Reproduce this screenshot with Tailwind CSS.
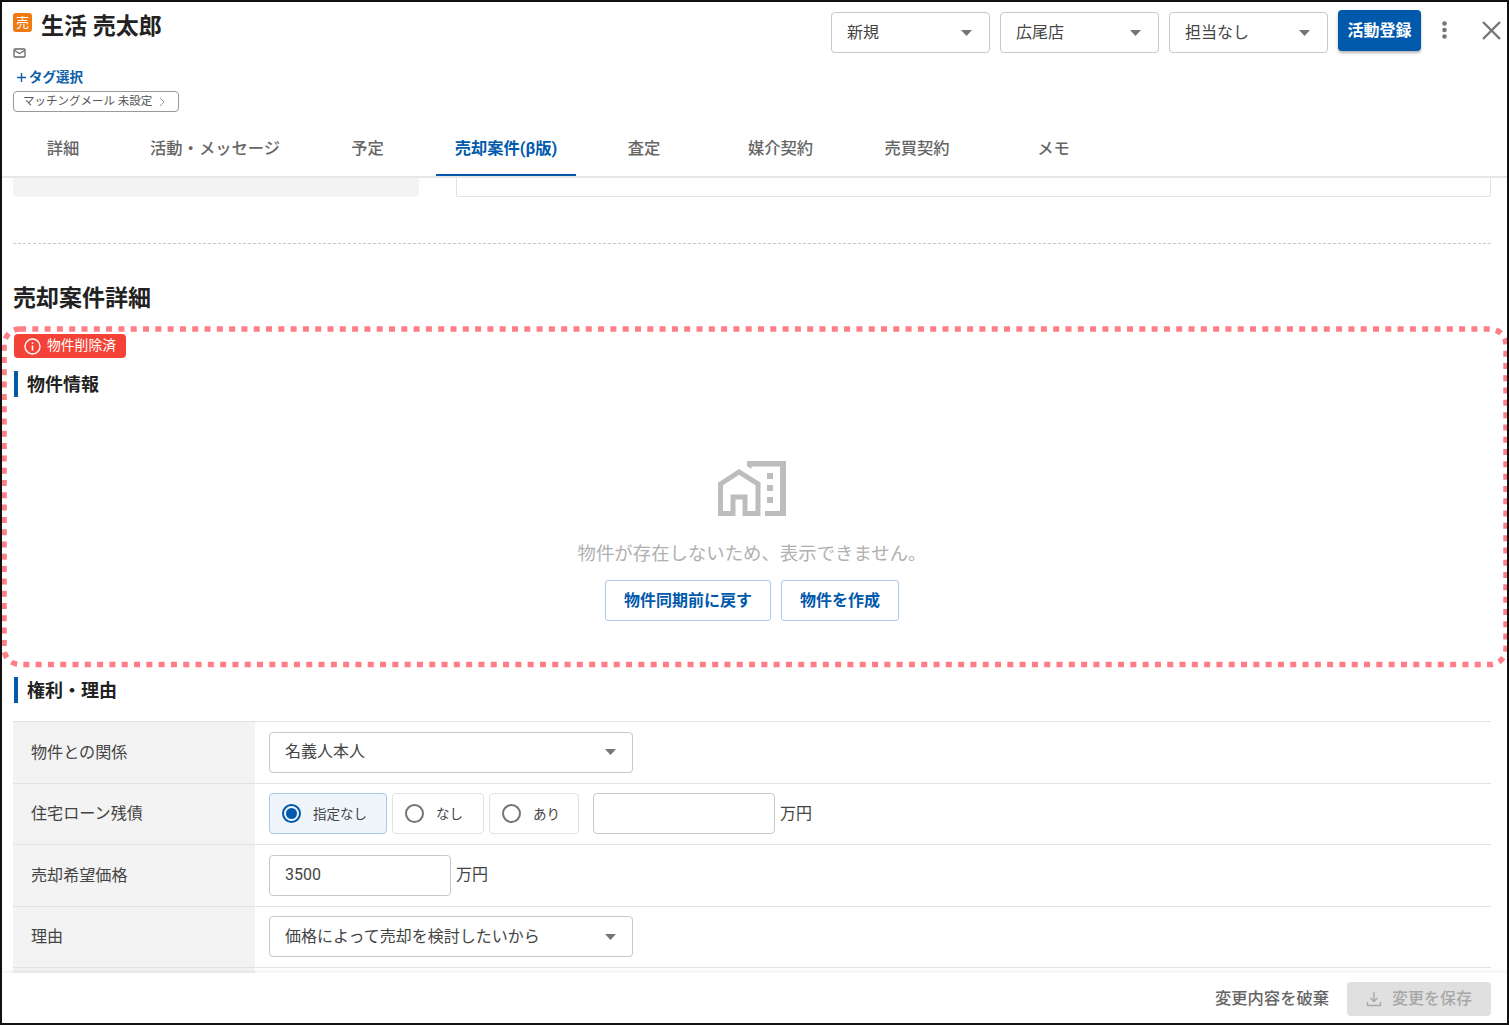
<!DOCTYPE html>
<html lang="ja">
<head>
<meta charset="utf-8">
<title>売却案件詳細</title>
<script src="https://cdn.jsdelivr.net/npm/@tailwindcss/browser@4"></script>
</head>
<body class="bg-white">
<div class="relative flex h-[1025px] w-[1509px] flex-col overflow-hidden border-2 border-[#111] bg-white font-['Roboto','Noto_Sans_CJK_JP',sans-serif] text-[#333]">

  <!-- header -->
  <header class="h-[176px] shrink-0 border-b-2 border-[#e6e6e6]">
    <div class="flex h-[118px] items-start">
      <div class="flex w-[799px] flex-col pl-[11px]">
        <div class="mt-[12px] flex h-[26px] items-center">
          <span class="flex h-[19px] w-[19px] -translate-y-[5px] items-center justify-center rounded-[3px] bg-[#f07a12] text-[13px] leading-none text-white">売</span>
          <span class="ml-[9px] text-[23px] leading-[26px] font-bold text-[#222]">生活 売太郎</span>
        </div>
        <svg class="mt-[8px] h-[10px] w-[13px]" viewBox="0 0 13 10" fill="none" stroke="#666" stroke-width="1.3"><rect x="1" y="1" width="11" height="8" rx="1"/><path d="M1.5 2.5 6.5 5.5 11.5 2.5"/></svg>
        <div class="mt-[10px] ml-[4px] flex h-[18px] items-center text-[13.5px] leading-[18px] font-bold text-[#0f5fa8]"><svg class="mr-[3px] h-[9px] w-[9px]" viewBox="0 0 9 9" stroke="#0f5fa8" stroke-width="1.400"><path d="M4.500 0v9M0 4.500h9"/></svg>タグ選択</div>
        <div class="mt-[5px] flex h-[21px] w-[166px] items-center rounded-[4px] border border-[#9a9a9a] pl-[9px] text-[11.5px] leading-none text-[#555]">
          マッチングメール 未設定
          <svg class="ml-[7px] h-[10px] w-[6px]" viewBox="0 0 6 10" fill="none" stroke="#999" stroke-width="1"><path d="M1 1l4 4-4 4"/></svg>
        </div>
      </div>
      <div class="ml-[30px] flex items-start pt-[8px]">
        <div class="mt-[2px] flex h-[41px] w-[159px] items-center justify-between rounded-[4px] border border-[#c8c8c8] pr-[17px] pl-[15px] text-[16px] text-[#444]">新規<svg class="h-[6px] w-[11px]" viewBox="0 0 11 6" fill="#757575"><path d="M0 0h11L5.5 6z"/></svg></div>
        <div class="mt-[2px] ml-[10px] flex h-[41px] w-[159px] items-center justify-between rounded-[4px] border border-[#c8c8c8] pr-[17px] pl-[15px] text-[16px] text-[#444]">広尾店<svg class="h-[6px] w-[11px]" viewBox="0 0 11 6" fill="#757575"><path d="M0 0h11L5.5 6z"/></svg></div>
        <div class="mt-[2px] ml-[10px] flex h-[41px] w-[159px] items-center justify-between rounded-[4px] border border-[#c8c8c8] pr-[17px] pl-[15px] text-[16px] text-[#444]">担当なし<svg class="h-[6px] w-[11px]" viewBox="0 0 11 6" fill="#757575"><path d="M0 0h11L5.5 6z"/></svg></div>
        <button class="ml-[10px] flex h-[41px] w-[83px] items-center justify-center rounded-[4px] bg-[#0059ab] text-[16px] font-bold text-white shadow-[0_2px_3px_rgba(0,0,0,0.3)]">活動登録</button>
        <svg class="mt-[11px] ml-[21px] h-[18px] w-[5px]" viewBox="0 0 5 18" fill="#757575"><circle cx="2.5" cy="2.5" r="2.3"/><circle cx="2.5" cy="9" r="2.3"/><circle cx="2.5" cy="15.500" r="2.3"/></svg>
        <svg class="mt-[11px] ml-[35px] h-[19px] w-[19px]" viewBox="0 0 19 19" fill="none" stroke="#757575" stroke-width="2.4"><path d="M1 1l17 17M18 1 1 18"/></svg>
      </div>
    </div>
    <nav class="flex h-[56px] pl-[11px] text-[16.3px] leading-[58px] font-medium text-[#666]">
      <div class="mr-[19px] w-[100px] text-center">詳細</div>
      <div class="w-[166px] text-center">活動・メッセージ</div>
      <div class="ml-[1px] w-[137px] text-center">予定</div>
      <div class="w-[140px] border-b-2 border-[#0059ab] text-center font-bold text-[#0059ab]">売却案件(β版)</div>
      <div class="w-[136px] text-center">査定</div>
      <div class="w-[137px] text-center">媒介契約</div>
      <div class="w-[136px] text-center">売買契約</div>
      <div class="w-[137px] text-center">メモ</div>
    </nav>
  </header>

  <!-- content -->
  <main class="min-h-0 flex-1 overflow-hidden pr-[16px] pl-[11px]">
    <div class="flex h-[19px]">
      <div class="w-[406px] rounded-b-[4px] bg-[#f3f3f3]"></div>
      <div class="ml-[37px] flex-1 rounded-b-[2px] border-x border-b border-[#e2e2e2]"></div>
    </div>
    <div class="mt-[46px] border-t border-dashed border-[#c8c8c8]"></div>
    <h2 class="mt-[39px] h-[30px] text-[23px] leading-[31px] font-bold text-[#222]">売却案件詳細</h2>

    <div class="mt-[21px] ml-[1px] flex h-[24px] w-[112px] items-center rounded-[4px] bg-[#f44336] pl-[10px] text-[13.8px] leading-none text-[#fff]">
      <svg class="mr-[6px] h-[17px] w-[17px]" viewBox="0 0 17 17" fill="none" stroke="#fff" stroke-width="1.4"><circle cx="8.500" cy="8.500" r="7.500"/><path d="M8.500 7.500v5" stroke-width="1.600"/><path d="M8.500 4.200v1.600" stroke-width="1.600"/></svg>
      物件削除済
    </div>

    <div class="mt-[13px] ml-[1px] h-[26px] border-l-4 border-[#0059ab] pl-[9px] text-[18px] leading-[28px] font-bold text-[#222]">物件情報</div>

    <div class="flex flex-col items-center">
      <svg class="mt-[64px] h-[55px] w-[68px]" viewBox="0 0 68 55" fill="none">
        <path d="M2.500 52.500V23L21 11 40 23V52.500H27V36H15V52.500Z" stroke="#bdbdbd" stroke-width="5"/>
        <path d="M29 0H68V55H47V50H62V5.500H33.500V8L29 5Z" fill="#bdbdbd"/>
        <path d="M49 12h6v6h-6zM49 24h6v6h-6zM49 36h6v6h-6z" fill="#bdbdbd"/>
      </svg>
      <p class="mt-[25px] h-[25px] text-[18.4px] leading-[26px] text-[#b0b0b0]">物件が存在しないため、表示できません。</p>
      <div class="mt-[14px] flex gap-[10px]">
        <button class="h-[41px] w-[166px] rounded-[3px] border border-[#a9c8ee] text-[16px] font-bold text-[#0059ab]">物件同期前に戻す</button>
        <button class="h-[41px] w-[118px] rounded-[3px] border border-[#a9c8ee] text-[16px] font-bold text-[#0059ab]">物件を作成</button>
      </div>
    </div>

    <div class="mt-[56px] ml-[1px] h-[26px] border-l-4 border-[#0059ab] pl-[9px] text-[18px] leading-[28px] font-bold text-[#222]">権利・理由</div>

    <div class="mt-[18px] border-t border-[#e2e2e2]">
      <div class="flex h-[61.5px] border-b border-[#e2e2e2]">
        <div class="flex w-[242px] items-center bg-[#f3f3f3] pt-[1px] pl-[18px] text-[16.1px] text-[#444]">物件との関係</div>
        <div class="flex flex-1 items-center pl-[14px]">
          <div class="flex h-[41px] w-[364px] items-center justify-between rounded-[4px] border border-[#c8c8c8] pr-[16px] pl-[15px] text-[16px] text-[#444]">名義人本人<svg class="h-[6px] w-[11px]" viewBox="0 0 11 6" fill="#757575"><path d="M0 0h11L5.500 6z"/></svg></div>
        </div>
      </div>
      <div class="flex h-[61.5px] border-b border-[#e2e2e2]">
        <div class="flex w-[242px] items-center bg-[#f3f3f3] pt-[1px] pl-[18px] text-[16.1px] text-[#444]">住宅ローン残債</div>
        <div class="flex flex-1 items-center pl-[14px] text-[16px] text-[#444]">
          <div class="flex h-[41px] w-[118px] items-center rounded-[4px] border border-[#a9c8ee] bg-[#f0f5fc] pl-[12px] text-[13.5px]">
            <span class="flex h-[19px] w-[19px] items-center justify-center rounded-full border-2 border-[#0059ab]"><span class="h-[11px] w-[11px] rounded-full bg-[#0059ab]"></span></span>
            <span class="ml-[12px]">指定なし</span>
          </div>
          <div class="ml-[5px] flex h-[41px] w-[92px] items-center rounded-[4px] border border-[#e2e2e2] pl-[12px] text-[13.5px]">
            <span class="h-[19px] w-[19px] rounded-full border-2 border-[#757575]"></span>
            <span class="ml-[12px]">なし</span>
          </div>
          <div class="ml-[5px] flex h-[41px] w-[90px] items-center rounded-[4px] border border-[#e2e2e2] pl-[12px] text-[13.5px]">
            <span class="h-[19px] w-[19px] rounded-full border-2 border-[#757575]"></span>
            <span class="ml-[12px]">あり</span>
          </div>
          <div class="ml-[14px] h-[41px] w-[182px] rounded-[4px] border border-[#c8c8c8]"></div>
          <span class="ml-[5px]">万円</span>
        </div>
      </div>
      <div class="flex h-[61.5px] border-b border-[#e2e2e2]">
        <div class="flex w-[242px] items-center bg-[#f3f3f3] pt-[1px] pl-[18px] text-[16.1px] text-[#444]">売却希望価格</div>
        <div class="flex flex-1 items-center pl-[14px] text-[16px] text-[#444]">
          <div class="flex h-[41px] w-[182px] items-center rounded-[4px] border border-[#c8c8c8] pl-[15px]">3500</div>
          <span class="ml-[5px]">万円</span>
        </div>
      </div>
      <div class="flex h-[61.5px] border-b border-[#e2e2e2]">
        <div class="flex w-[242px] items-center bg-[#f3f3f3] pt-[1px] pl-[18px] text-[16.1px] text-[#444]">理由</div>
        <div class="flex flex-1 items-center pl-[14px]">
          <div class="flex h-[41px] w-[364px] items-center justify-between rounded-[4px] border border-[#c8c8c8] pr-[16px] pl-[15px] text-[16px] text-[#444]">価格によって売却を検討したいから<svg class="h-[6px] w-[11px]" viewBox="0 0 11 6" fill="#757575"><path d="M0 0h11L5.500 6z"/></svg></div>
        </div>
      </div>
      <div class="h-[6px] w-[242px] bg-[#f3f3f3]"></div>
    </div>
  </main>

  <!-- footer -->
  <footer class="relative flex h-[50px] shrink-0 items-center justify-end bg-white pt-[2px] pr-[16px] shadow-[0_-2px_4px_rgba(0,0,0,0.06)]">
    <span class="text-[16.3px] font-medium text-[#666]">変更内容を破棄</span>
    <button class="ml-[18px] flex h-[34px] w-[144px] items-center justify-center rounded-[4px] bg-[#e0e0e0] text-[16px] font-medium text-[#a8a8a8]">
      <svg class="mr-[10px] h-[16px] w-[16px]" viewBox="0 0 16 16" fill="none" stroke="#a8a8a8" stroke-width="1.400"><path d="M8 1v9M4.500 7 8 10.500 11.500 7M1.500 11v3.500h13V11"/></svg>
      変更を保存
    </button>
  </footer>

  <!-- annotation overlay -->
  <svg class="pointer-events-none absolute top-[325px] left-0 h-[340px] w-[1505px] overflow-visible" viewBox="0 0 1505 340" fill="none">
    <rect x="2" y="2" width="1502" height="335.500" rx="16" stroke="#ff7d86" stroke-width="5.500" stroke-dasharray="6 6.300"/>
  </svg>
</div>
</body>
</html>
